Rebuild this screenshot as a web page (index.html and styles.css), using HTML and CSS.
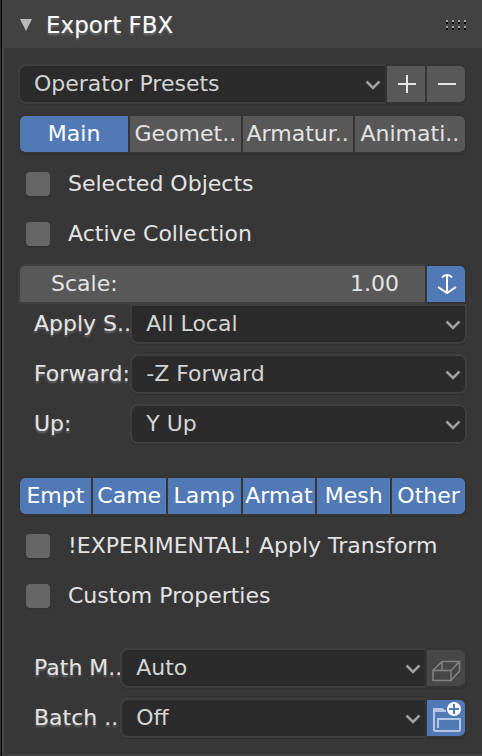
FILE: index.html
```html
<!DOCTYPE html>
<html lang="en">
<head>
<meta charset="utf-8">
<meta name="viewport" content="width=device-width, initial-scale=1">
<title>Export FBX</title>
<link rel="stylesheet" href="styles.css">
</head>
<body>
<main class="panel">
  <header class="panel-header">
    <svg class="disclosure" width="12" height="12" viewBox="0 0 12 12" aria-hidden="true"><path d="M0 0H12L6 12Z" fill="#b9b9b9"/></svg>
    <h1 class="title">Export FBX</h1>
    <svg class="grip" width="20" height="10" viewBox="0 0 20 10" shape-rendering="crispEdges" aria-hidden="true">
      <path d="M0 1H2M6 1H8M12 1H14M18 1H20M0 7H2M6 7H8M12 7H14M18 7H20" stroke="#a0a0a0" stroke-width="2"/>
      <path d="M0 3H2M6 3H8M12 3H14M18 3H20M0 9H2M6 9H8M12 9H14M18 9H20" stroke="#000" stroke-width="2"/>
    </svg>
  </header>

  <form class="panel-body">
    <div class="row group presets">
      <div class="dropdown">
        <select aria-label="Operator Presets"><option>Operator Presets</option></select>
        <svg class="chevron" width="16" height="10" viewBox="0 0 16 10" aria-hidden="true"><path d="M1.5 1.5L8 8L14.5 1.5"/></svg>
      </div>
      <button type="button" class="btn icon-btn" aria-label="Add preset"><svg width="18" height="18" viewBox="0 0 18 18"><path d="M9 0V18M0 9H18" stroke="#e6e6e6" stroke-width="2"/></svg></button>
      <button type="button" class="btn icon-btn" aria-label="Remove preset"><svg width="18" height="18" viewBox="0 0 18 18"><path d="M0 9H18" stroke="#e6e6e6" stroke-width="2"/></svg></button>
    </div>

    <div class="row group tabs">
      <button type="button" class="btn on" aria-pressed="true">Main</button>
      <button type="button" class="btn">Geomet..</button>
      <button type="button" class="btn">Armatur..</button>
      <button type="button" class="btn">Animati..</button>
    </div>

    <label class="row check"><input type="checkbox">Selected Objects</label>
    <label class="row check"><input type="checkbox">Active Collection</label>

    <div class="stack">
      <div class="row group scale">
        <div class="number">
          <label for="scale">Scale:</label>
          <input id="scale" type="text" value="1.00">
        </div>
        <button type="button" class="btn icon-btn on" aria-label="Apply unit" aria-pressed="true"><svg width="20" height="22" viewBox="0 0 20 22" fill="none" stroke="#fff" stroke-width="2"><path d="M10 2V20M5 4.500Q7 2 10 2Q13 2 15 4.500M1 14L10 20L19 14"/></svg></button>
      </div>
      <div class="row field">
        <label class="name" for="apply">Apply S..</label>
        <div class="dropdown">
          <select id="apply"><option>All Local</option></select>
          <svg class="chevron" width="16" height="10" viewBox="0 0 16 10" aria-hidden="true"><path d="M1.5 1.5L8 8L14.5 1.5"/></svg>
        </div>
      </div>
    </div>
    <div class="row field">
      <label class="name" for="forward">Forward:</label>
      <div class="dropdown">
        <select id="forward"><option>-Z Forward</option></select>
        <svg class="chevron" width="16" height="10" viewBox="0 0 16 10" aria-hidden="true"><path d="M1.5 1.5L8 8L14.5 1.5"/></svg>
      </div>
    </div>
    <div class="row field">
      <label class="name" for="up">Up:</label>
      <div class="dropdown">
        <select id="up"><option>Y Up</option></select>
        <svg class="chevron" width="16" height="10" viewBox="0 0 16 10" aria-hidden="true"><path d="M1.5 1.5L8 8L14.5 1.5"/></svg>
      </div>
    </div>

    <div class="row group types section">
      <button type="button" class="btn on" aria-pressed="true">Empt</button>
      <button type="button" class="btn on" aria-pressed="true">Came</button>
      <button type="button" class="btn on" aria-pressed="true">Lamp</button>
      <button type="button" class="btn on" aria-pressed="true">Armat</button>
      <button type="button" class="btn on" aria-pressed="true">Mesh</button>
      <button type="button" class="btn on" aria-pressed="true">Other</button>
    </div>

    <label class="row check"><input type="checkbox">!EXPERIMENTAL! Apply Transform</label>
    <label class="row check"><input type="checkbox">Custom Properties</label>

    <div class="row group field with-button section">
      <label class="name" for="path">Path M..</label>
      <div class="dropdown">
        <select id="path"><option>Auto</option></select>
        <svg class="chevron" width="16" height="10" viewBox="0 0 16 10" aria-hidden="true"><path d="M1.5 1.5L8 8L14.5 1.5"/></svg>
      </div>
      <button type="button" class="btn icon-btn" disabled aria-label="Embed textures"><svg width="30" height="30" viewBox="1 -1 30 30" fill="none" stroke="#828282" stroke-width="1.500"><path d="M2 16.500H20V26.500H2ZM2 16.500L11 7.500H28.500L20 16.500M28.500 7.500V17L20 26.500M11 7.500V16.500"/></svg></button>
    </div>
    <div class="row group field with-button">
      <label class="name" for="batch">Batch ..</label>
      <div class="dropdown">
        <select id="batch"><option>Off</option></select>
        <svg class="chevron" width="16" height="10" viewBox="0 0 16 10" aria-hidden="true"><path d="M1.5 1.5L8 8L14.5 1.5"/></svg>
      </div>
      <button type="button" class="btn icon-btn on" aria-label="Batch own directory" aria-pressed="true"><svg width="34" height="36" viewBox="2 0 34 36" fill="none" stroke="#b4c6e2" stroke-width="2"><path d="M10 28V19H32V30Q32 31 31 31H7Q6 31 6 30V11H18"/><path d="M5 8H14L17 10V12H5Z" fill="#b4c6e2" stroke="none"/><circle cx="26" cy="9" r="7" fill="#fff" stroke="none"/><path d="M26 4V14M21 9H31" stroke="#5179b5"/></svg></button>
    </div>
  </form>
</main>
</body>
</html>
```

FILE: styles.css
```css
* {
  box-sizing: border-box;
}

html {
  padding-left: 1px;
  background: #303030;
}

body {
  min-height: 100vh;
  margin: 0;
  border-left: 1px solid #000;
  background: #424242;
  color: #e3e3e3;
  font: 22px/28px "DejaVu Sans", sans-serif;
}

.panel {
  border-left: 2px solid #474747;
  background: #373737;
}

.panel-header {
  display: flex;
  align-items: center;
  height: 48px;
  padding: 2px 16px 0;
  background: #424242;
}

.title {
  flex: 1;
  margin: 0 0 0 14px;
  color: #fff;
  font-size: 23px;
  font-weight: normal;
  text-shadow: 0 2px 2px #ffffff40;
}

.panel-body {
  display: grid;
  gap: 10px;
  padding: 16px 15px 16px 14px;
}

.row {
  min-height: 40px;
}

.stack {
  display: grid;
}

.section {
  margin-top: 22px;
}

.group {
  display: grid;
}

.group > .btn + .btn,
.group > .btn:last-child {
  margin-left: -2px;
}

.group > .btn:first-child {
  border-radius: 7px 0 0 7px;
}

.group > .btn:last-child {
  border-radius: 0 7px 7px 0;
}

.presets {
  grid-template-columns: 1fr 40px 40px;
}

.scale {
  grid-template-columns: 1fr 40px;
}

.presets > .icon-btn {
  margin-left: -2px;
}

.tabs {
  grid-template-columns: repeat(4, 1fr);
}

.types {
  grid-template-columns: repeat(6, 1fr);
}

.btn {
  display: flex;
  align-items: center;
  justify-content: center;
  min-width: 0;
  height: 40px;
  padding: 0;
  border: 2px solid #353535;
  border-radius: 0;
  background: #585858;
  background-clip: padding-box;
  box-shadow: 0 1px #303030;
  color: #e3e3e3;
  font: inherit;
  white-space: nowrap;
}

.icon-btn {
  padding-left: 2px;
}

.btn.on {
  background-color: #5179b5;
  color: #fff;
}

.btn:disabled {
  background-color: #474747;
}

.dropdown {
  display: grid;
  align-items: center;
  min-width: 0;
}

.dropdown > * {
  grid-area: 1 / 1;
}

select {
  appearance: none;
  width: 100%;
  height: 40px;
  margin: 0;
  padding: 0 24px 0 14px;
  border: 2px solid #3f3f3f;
  border-radius: 8px;
  background: #2b2b2b;
  box-shadow: 0 1px #303030;
  color: #d4d4d4;
  font: inherit;
}

.group select {
  border-radius: 8px 0 0 8px;
}

.chevron {
  justify-self: end;
  margin: 1px 6px 0 0;
  fill: none;
  stroke: #a0a0a0;
  stroke-width: 2.5;
  pointer-events: none;
}

.check {
  display: flex;
  align-items: center;
  gap: 18px;
  padding-left: 8px;
}

.check input {
  appearance: none;
  width: 24px;
  height: 24px;
  margin: 0;
  border-radius: 4px;
  background: #666;
  box-shadow: 0 2px #323232;
}

.number {
  display: flex;
  align-items: center;
  height: 40px;
  padding: 0 26px 0 31px;
  border: 2px solid #3f3f3f;
  border-radius: 8px 0 0;
  background: #585858;
}

.number input {
  flex: 1;
  min-width: 0;
  padding: 0;
  border: 0;
  background: none;
  color: #e3e3e3;
  font: inherit;
  text-align: right;
}

.scale > .btn:last-child {
  border-radius: 0 7px 0 0;
}

.field {
  display: grid;
  grid-template-columns: minmax(0, 1fr) minmax(0, 3fr);
  align-items: center;
}

.with-button {
  grid-template-columns: minmax(0, 1fr) minmax(0, 3fr) 40px;
}

.name {
  padding-left: 16px;
  white-space: nowrap;
  text-shadow: 0 2px 2px #ffffff40;
}

.stack select {
  border-radius: 0 0 8px 8px;
}
```
